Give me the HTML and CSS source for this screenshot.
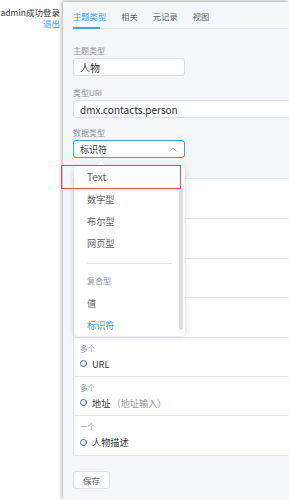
FILE: index.html
```html
<!DOCTYPE html>
<html lang="zh">
<head>
    <meta charset="UTF-8">
    <meta name="viewport" content="width=device-width, initial-scale=1.0">
    <title>主题类型</title>
    <link rel="stylesheet" href="styles.css">
</head>
<body>
    <div class="login">
        <div class="login-name">admin成功登录</div>
        <a href="#" class="logout">退出</a>
    </div>

    <div class="panel">
        <div class="tabs">
            <div class="tab active">主题类型</div>
            <div class="tab">相关</div>
            <div class="tab">元记录</div>
            <div class="tab">视图</div>
        </div>

        <div class="form-group group-name">
            <label>主题类型</label>
            <div class="input short">人物</div>
        </div>

        <div class="form-group group-uri">
            <label>类型URI</label>
            <div class="input wide">dmx.contacts.person</div>
        </div>

        <div class="form-group group-type">
            <label>数据类型</label>
            <div class="select-wrap">
                <div class="input short focus">
                    <span>标识符</span>
                    <svg class="chevron" width="8" height="5" viewBox="0 0 8 5"><path d="M0.5 4.5 L4 1 L7.5 4.5" fill="none" stroke="#b8bcc4" stroke-width="1"/></svg>
                </div>
                <div class="dropdown">
                    <div class="dropdown-arrow"></div>
                    <div class="dropdown-list">
                        <div class="option">Text</div>
                        <div class="option">数字型</div>
                        <div class="option">布尔型</div>
                        <div class="option">网页型</div>
                        <div class="divider"></div>
                        <div class="group-label">复合型</div>
                        <div class="option">值</div>
                        <div class="option selected">标识符</div>
                    </div>
                    <div class="scrollbar"></div>
                </div>
            </div>
        </div>

        <div class="fields">
            <div class="field-row">
                <div class="card">一个</div>
                <div class="field-name"><span class="dot"></span>名字</div>
            </div>
            <div class="field-row">
                <div class="card">一个</div>
                <div class="field-name"><span class="dot"></span>组织</div>
            </div>
            <div class="field-row">
                <div class="card">多个</div>
                <div class="field-name"><span class="dot"></span>电话</div>
            </div>
            <div class="field-row">
                <div class="card">多个</div>
                <div class="field-name"><span class="dot"></span>电子邮件</div>
            </div>
            <div class="field-row">
                <div class="card">多个</div>
                <div class="field-name"><span class="dot"></span>URL</div>
            </div>
            <div class="field-row">
                <div class="card">多个</div>
                <div class="field-name"><span class="dot"></span>地址<span class="hint">（地址输入）</span></div>
            </div>
            <div class="field-row">
                <div class="card">一个</div>
                <div class="field-name"><span class="dot"></span>人物描述</div>
            </div>
        </div>

        <button class="save-btn">保存</button>
    </div>

    <div class="mark"></div>
</body>
</html>
```

FILE: styles.css
```css
:root {
    --blue: #409eff;
    --border: #dcdfe6;
    --line: #e4e7ed;
    --text: #303133;
    --text-light: #909399;
    --panel-bg: #f5f6f9;
}

* {
    margin: 0;
    padding: 0;
    box-sizing: border-box;
    font-family: "Noto Sans CJK SC", "Noto Sans", sans-serif;
}

body {
    display: flex;
    width: 289px;
    height: 500px;
    overflow: hidden;
    background: #fff;
}

.login {
    width: 63px;
    flex-shrink: 0;
    padding: 7px 3px 0 0;
    text-align: right;
    font-size: 8.5px;
    line-height: 11px;
    color: var(--text);
}

.logout {
    color: var(--blue);
    text-decoration: none;
}

.panel {
    flex: 1;
    margin-top: 2px;
    padding-left: 10px;
    background: var(--panel-bg);
    box-shadow: -1px -1px 4px rgba(0, 0, 0, 0.35);
    min-width: 0;
    overflow: hidden;
}

/* tabs */
.tabs {
    display: flex;
    gap: 15px;
    height: 27px;
    border-bottom: 1px solid var(--line);
}

.tab {
    position: relative;
    padding-top: 4px;
    line-height: 20px;
    font-size: 8.3px;
    color: #606266;
}

.tab.active {
    color: var(--blue);
}

.tab.active::after {
    content: "";
    position: absolute;
    left: 0;
    bottom: -1px;
    width: 27px;
    height: 2px;
    background: var(--blue);
}

/* form */
.group-name {
    margin-top: 16px;
}

.group-uri {
    margin-top: 11px;
}

.group-type {
    margin-top: 9px;
}

label {
    display: block;
    font-size: 8px;
    line-height: 12px;
    margin-bottom: 1px;
    color: var(--text-light);
}

.input {
    display: flex;
    align-items: center;
    height: 18px;
    padding: 0 6px;
    background: #fff;
    border: 1px solid var(--border);
    border-radius: 3px;
    font-size: 10px;
    color: var(--text);
}

.input.short {
    width: 112px;
}

.input.wide {
    width: 240px;
}

.input.focus {
    border-color: var(--blue);
    justify-content: space-between;
    font-size: 9px;
}

.chevron {
    margin-right: 1px;
}

.select-wrap {
    position: relative;
}

.dropdown {
    position: absolute;
    top: 26px;
    left: 1px;
    width: 111px;
    height: 170px;
    background: #fff;
    border-radius: 4px;
    box-shadow: 0 1px 6px rgba(0, 0, 0, 0.15);
    z-index: 5;
}

.dropdown-arrow {
    position: absolute;
    top: -4px;
    left: 23px;
    width: 7px;
    height: 7px;
    background: #fff;
    transform: rotate(45deg);
    box-shadow: -1px -1px 1px rgba(0, 0, 0, 0.05);
}

.dropdown-list {
    position: relative;
    height: 100%;
    overflow: hidden;
    border-radius: 4px;
}

.option,
.group-label {
    height: 22px;
    line-height: 22px;
    padding-left: 13px;
    font-size: 9.2px;
    color: #606266;
}

.option:first-child {
    font-size: 10px;
}

.option.selected {
    color: var(--blue);
}

.divider {
    height: 1px;
    margin: 9px 13px 0 13px;
    background: var(--line);
}

.group-label {
    margin-top: 6px;
    font-size: 8px;
    color: var(--text-light);
}

.scrollbar {
    position: absolute;
    right: 2px;
    top: 22px;
    width: 4px;
    height: 142px;
    border-radius: 2px;
    background: #dddee1;
}

/* fields */
.fields {
    margin-top: 20px;
    margin-right: -20px;
    background: #fff;
    border: 1px solid var(--line);
}

.field-row {
    height: 39.4px;
    padding: 5px 0 0 6px;
    border-top: 1px solid var(--line);
}

.field-row:first-child {
    border-top: none;
}

.card {
    font-size: 7.5px;
    line-height: 11px;
    color: var(--text-light);
}

.field-name {
    display: flex;
    align-items: center;
    gap: 5px;
    margin-top: 4px;
    font-size: 9.2px;
    line-height: 12px;
    color: var(--text);
}

.dot {
    width: 7px;
    height: 7px;
    border: 1.3px solid #2f62a8;
    border-radius: 50%;
}

.hint {
    margin-left: -4px;
    color: var(--text-light);
}

.save-btn {
    display: block;
    margin-top: 15px;
    height: 18px;
    width: 37px;
    background: #fff;
    border: 1px solid var(--border);
    border-radius: 3px;
    font-size: 8.5px;
    color: #606266;
}

/* red highlight frame */
.mark {
    position: absolute;
    left: 61px;
    top: 165px;
    width: 120px;
    height: 24px;
    border: 1px solid #e8504f;
    z-index: 10;
}
```
